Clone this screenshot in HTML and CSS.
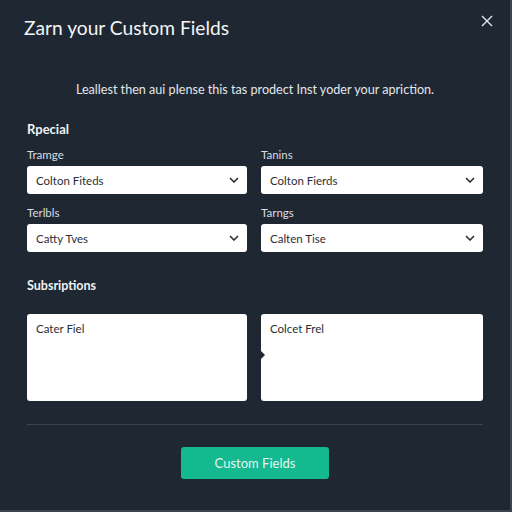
FILE: index.html
```html
<!DOCTYPE html>
<html>
<head>
<meta charset="utf-8">
<link rel="stylesheet" href="styles.css">
</head>
<body>
<div class="dialog">
  <div class="header">
    <h1 class="title">Zarn your Custom Fields</h1>
    <svg class="close" width="12" height="12" viewBox="0 0 12 12"><path d="M1 1L11 11M11 1L1 11" stroke="#e6e9ec" stroke-width="1.4" fill="none"/></svg>
  </div>
  <p class="subtitle">Leallest then aui pIense this tas prodect Inst yoder your apriction.</p>
  <div class="section-title">Rpecial</div>
  <div class="grid">
    <div class="field">
      <div class="label">Tramge</div>
      <div class="select"><span>Colton Fiteds</span><svg class="chev" width="10" height="6" viewBox="0 0 10 6"><path d="M1 1L5 5L9 1" stroke="#2a2f36" stroke-width="1.6" fill="none"/></svg></div>
    </div>
    <div class="field">
      <div class="label">Tanins</div>
      <div class="select"><span>Colton Fierds</span><svg class="chev" width="10" height="6" viewBox="0 0 10 6"><path d="M1 1L5 5L9 1" stroke="#2a2f36" stroke-width="1.6" fill="none"/></svg></div>
    </div>
    <div class="field">
      <div class="label">Terlbls</div>
      <div class="select"><span>Catty Tves</span><svg class="chev" width="10" height="6" viewBox="0 0 10 6"><path d="M1 1L5 5L9 1" stroke="#2a2f36" stroke-width="1.6" fill="none"/></svg></div>
    </div>
    <div class="field">
      <div class="label">Tarngs</div>
      <div class="select"><span>Calten Tise</span><svg class="chev" width="10" height="6" viewBox="0 0 10 6"><path d="M1 1L5 5L9 1" stroke="#2a2f36" stroke-width="1.6" fill="none"/></svg></div>
    </div>
  </div>
  <div class="section-title sub">Subsriptions</div>
  <div class="grid areas">
    <div class="area">Cater Fiel</div>
    <div class="area notched">Colcet Frel</div>
  </div>
  <div class="divider"></div>
  <div class="actions">
    <button class="btn">Custom Fields</button>
  </div>
</div>
</body>
</html>
```
FILE: styles.css
```css
html, body {
  margin: 0;
  padding: 0;
  background: #1f2832;
}
.dialog {
  box-sizing: border-box;
  width: 512px;
  height: 512px;
  padding: 0 27px;
  background: #1f2832;
  border-right: 2px solid #3b4550;
  border-bottom: 2px solid #3b4550;
  font-family: "Lato", "Liberation Sans", sans-serif;
  color: #e9ecef;
}
.header {
  display: flex;
  justify-content: space-between;
  align-items: flex-start;
  margin-left: -3px;
  margin-right: -10px;
}
.title {
  margin: 15px 0 0 0;
  font-size: 19.2px;
  font-weight: 400;
  line-height: 26px;
  color: #f3f5f7;
}
.close {
  margin-top: 15px;
}
.subtitle {
  margin: 40px 0 0 0;
  text-align: center;
  font-size: 12.6px;
  line-height: 18px;
  color: #e3e6ea;
}
.section-title {
  margin-top: 22px;
  font-size: 13px;
  font-weight: 700;
  line-height: 16px;
  color: #eef1f4;
}
.section-title.sub {
  margin-top: 26px;
  font-weight: 700;
  font-size: 12.5px;
}
.grid {
  display: grid;
  grid-template-columns: 220px 222px;
  column-gap: 14px;
  row-gap: 12px;
  margin-top: 11px;
}
.label {
  font-size: 11.5px;
  line-height: 14px;
  color: #d9dde2;
  margin-bottom: 4px;
}
.select {
  height: 28px;
  background: #ffffff;
  border-radius: 3px;
  display: flex;
  align-items: center;
  justify-content: space-between;
  padding: 0 8px 0 9px;
  font-size: 11.5px;
  color: #2b2f35;
}
.areas {
  margin-top: 20px;
}
.area {
  height: 87px;
  background: #ffffff;
  border-radius: 3px;
  padding: 8px 9px;
  box-sizing: border-box;
  font-size: 11.5px;
  color: #2b2f35;
  position: relative;
}
.notched::before {
  content: "";
  position: absolute;
  left: 0;
  top: 37px;
  border-top: 4px solid transparent;
  border-bottom: 4px solid transparent;
  border-left: 4px solid #1f2832;
}
.divider {
  margin-top: 23px;
  height: 1px;
  background: #3a444f;
}
.actions {
  display: flex;
  justify-content: center;
  margin-top: 22px;
}
.btn {
  width: 148px;
  height: 32px;
  background: #14b98f;
  border: none;
  border-radius: 3px;
  color: #e3f7f0;
  font-family: "Lato", "Liberation Sans", sans-serif;
  font-size: 13px;
  padding: 0;
}
```
